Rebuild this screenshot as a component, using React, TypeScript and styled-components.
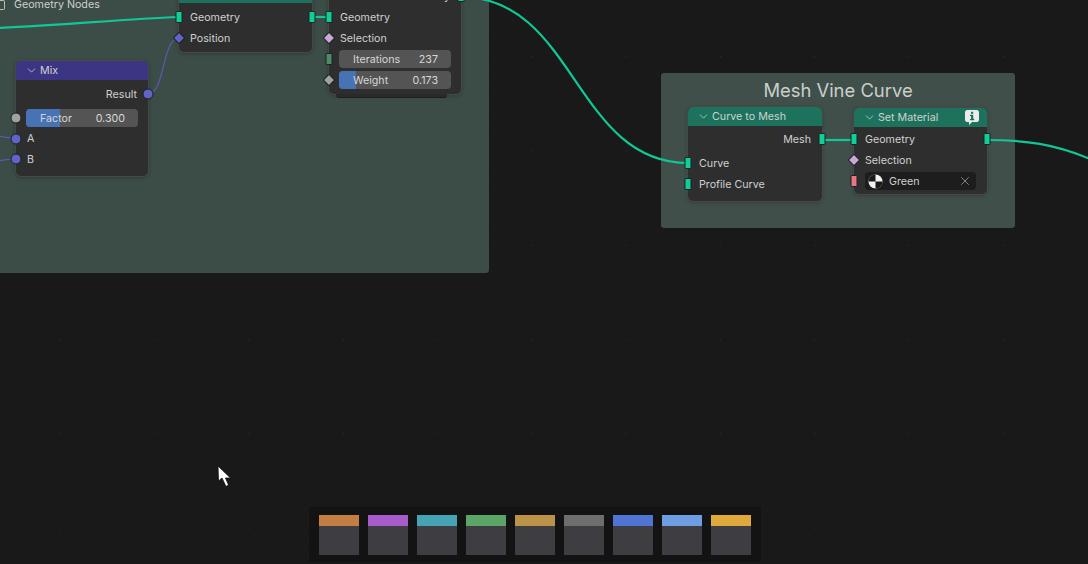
import React from 'react'
import styled, { createGlobalStyle } from 'styled-components'
import { ChevronDown, X } from 'lucide-react'

const GlobalStyle = createGlobalStyle`
  html, body {
    margin: 0;
    padding: 0;
    background: #181818;
  }
`

const Canvas = styled.div`
  position: relative;
  width: 1088px;
  height: 564px;
  overflow: hidden;
  display: flex;
  justify-content: center;
  align-items: flex-end;
  padding: 0 18px 2px 0;
  box-sizing: border-box;
  background-color: #191919;
  background-image: radial-gradient(circle at 0.5px 0.5px, #2b2b2b 0.8px, transparent 1px),
    radial-gradient(circle at 0.5px 0.5px, #202020 0.8px, transparent 1px);
  background-size: 94.3px 94.3px, 18.86px 18.86px;
  background-position: 60px 56px, 3px 0px;
  font-family: Inter, 'Noto Sans', sans-serif;
  font-size: 10.7px;
  color: #d0d0d0;
`

const Frame = styled.div<{ $x: number; $y: number; $w: number; $h: number; $bg: string }>`
  position: absolute;
  left: ${(p) => p.$x}px;
  top: ${(p) => p.$y}px;
  width: ${(p) => p.$w}px;
  height: ${(p) => p.$h}px;
  background: ${(p) => p.$bg};
  border-radius: 3px;
  text-align: center;
`

const FrameTitle = styled.div`
  padding-top: 6px;
  font-size: 18.4px;
  line-height: 22px;
  color: #c9cfcc;
`

const Node = styled.div<{ $x: number; $y: number; $w?: number; $bottom?: number }>`
  position: absolute;
  left: ${(p) => p.$x}px;
  top: ${(p) => p.$y}px;
  width: ${(p) => p.$w ?? 133}px;
  box-sizing: border-box;
  background: #2e2e2e;
  border-radius: 5px;
  box-shadow: 0 0 0 1px #454a48, 0 1px 4px rgba(0, 0, 0, 0.35);
  padding-bottom: ${(p) => p.$bottom ?? 7}px;
`

const Header = styled.div<{ $bg: string }>`
  display: flex;
  align-items: center;
  height: 19px;
  padding: 0 8px 0 9px;
  gap: 2px;
  box-sizing: border-box;
  background: ${(p) => p.$bg};
  border-radius: 5px 5px 0 0;
  color: #d0d0d0;
  svg {
    flex: none;
  }
`

const HeaderTitle = styled.span`
  flex: 1;
`

const Rows = styled.div<{ $pad: number }>`
  padding-top: ${(p) => p.$pad}px;
`

const Row = styled.div<{ $right?: boolean; $gap?: number; $h?: number }>`
  position: relative;
  height: ${(p) => p.$h ?? 21}px;
  margin-top: ${(p) => p.$gap ?? 0}px;
  padding: 1px 11px 0;
  display: flex;
  align-items: center;
  justify-content: ${(p) => (p.$right ? 'flex-end' : 'flex-start')};
  box-sizing: border-box;
`

type SocketKind = 'geo' | 'diamond' | 'grey' | 'circle' | 'mat' | 'int' | 'float' | 'vector'

const socketColors: Record<SocketKind, string> = {
  geo: '#12cc9a',
  diamond: '#cca6d6',
  grey: '#a1a1a1',
  circle: '#6363c7',
  mat: '#eb7582',
  int: '#4f8a68',
  float: '#a1a1a1',
  vector: '#6363c7',
}

const isBar = (k: SocketKind) => k === 'geo' || k === 'mat' || k === 'int'
const isDiamond = (k: SocketKind) => k === 'diamond' || k === 'float' || k === 'vector'

const Socket = styled.span<{ $kind: SocketKind; $right?: boolean }>`
  position: absolute;
  top: calc(50% + 0.5px);
  ${(p) => (p.$right ? 'right: 0;' : 'left: 0;')}
  transform: translate(${(p) => (p.$right ? '50%' : '-50%')}, -50%)
    ${(p) => (isDiamond(p.$kind) ? 'rotate(45deg)' : '')};
  box-sizing: border-box;
  border: 1px solid #17241f;
  width: ${(p) => (isBar(p.$kind) ? 7 : isDiamond(p.$kind) ? 9 : 11)}px;
  height: ${(p) => (isBar(p.$kind) ? 12 : isDiamond(p.$kind) ? 9 : 11)}px;
  border-radius: ${(p) => (p.$kind === 'grey' || p.$kind === 'circle' ? '50%' : '1px')};
  background: ${(p) => socketColors[p.$kind]};
`

const Field = styled.div`
  position: relative;
  flex: 1;
  height: 18px;
  margin-left: -1px;
  margin-right: -1px;
  padding: 0 13px 0 14px;
  display: flex;
  align-items: center;
  justify-content: space-between;
  background: #545454;
  border-radius: 4px;
  overflow: hidden;
  color: #d6d6d6;
  span {
    position: relative;
  }
`

const Fill = styled.div`
  position: absolute;
  left: 0;
  top: 0;
  bottom: 0;
  background: #4772b3;
`

const MaterialField = styled.div`
  flex: 1;
  height: 18px;
  padding: 0 4px 0 3px;
  display: flex;
  align-items: center;
  gap: 6px;
  background: #1d1d1d;
  border-radius: 4px;
  color: #d0d0d0;
  span {
    flex: 1;
  }
`

const StackEdge = styled.div`
  position: absolute;
  left: 7px;
  right: 14px;
  bottom: -4px;
  height: 3px;
  background: #2a2a2a;
  border-bottom: 1px solid #1e1e1e;
  border-radius: 0 0 3px 3px;
`

const Label = styled.div`
  position: absolute;
  left: 14px;
  top: -2px;
  color: #cfcfcf;
  line-height: 14px;
`

const BracketIcon = styled.div`
  position: absolute;
  left: -14px;
  top: 2px;
  width: 4px;
  height: 8px;
  border: solid #b8bdbb;
  border-width: 1px 1px 1px 0;
  border-radius: 0 2px 2px 0;
`

const Wires = styled.svg`
  position: absolute;
  left: 0;
  top: 0;
  pointer-events: none;
`

const Cursor = styled.svg`
  position: absolute;
  left: 217px;
  top: 465px;
`

const Palette = styled.div`
  position: relative;
  display: flex;
  gap: 9px;
  padding: 8px 10px 7px;
  background: #131313;
`

const Swatch = styled.div<{ $color: string }>`
  width: 40px;
  height: 40px;
  background: linear-gradient(${(p) => p.$color} 11px, #3e3e42 11px);
`

const swatches = ['#c47e41', '#a85ccb', '#46a3b4', '#5ba566', '#bc9148', '#6e6e6e', '#4f74d3', '#6d9ee2', '#dfaa3b']

const TEAL_HEADER = '#1d725e'
const PURPLE_HEADER = '#3c3584'

const Chevron = () => <ChevronDown size={13} strokeWidth={1.4} color="#d4d4d4" />

const InfoIcon = () => (
  <svg width="14" height="15" viewBox="0 0 14 15">
    <path d="M2.500 0h9A2.500 2.500 0 0 1 14 2.500v7a2.500 2.500 0 0 1-2.500 2.500H7l-3 3v-3H2.500A2.500 2.500 0 0 1 0 9.500v-7A2.500 2.500 0 0 1 2.500 0z" fill="#ececec" />
    <rect x="6" y="1.800" width="2.200" height="2" fill="#1d725e" />
    <path d="M5 4.800h3.200v4h1V10.200H5V9h1V6H5z" fill="#1d725e" />
  </svg>
)

const MaterialIcon = () => (
  <svg width="15" height="15" viewBox="0 0 16 16">
    <circle cx="8" cy="8" r="7.500" fill="#f2f2f2" />
    <path d="M8 .5A7.500 7.500 0 0 0 .5 8H8z" fill="#1a1a1a" />
    <path d="M8 8h7.500A7.500 7.500 0 0 1 8 15.500z" fill="#1a1a1a" />
  </svg>
)

export default function App() {
  return (
    <>
      <GlobalStyle />
      <Canvas>
        <Frame $x={-20} $y={-20} $w={509} $h={293} $bg="#3c4c46" />
        <Frame $x={661} $y={73} $w={354} $h={155} $bg="#414f4a">
          <FrameTitle>Mesh Vine Curve</FrameTitle>
        </Frame>

        <Label>
          <BracketIcon />
          Geometry Nodes
        </Label>

        <Wires width="1088" height="564" viewBox="0 0 1088 564" fill="none">
          <g stroke="#0fc896" strokeWidth="2.200">
            <path d="M-5 28 C60 26 120 19 179 17" />
            <path d="M312 17 H329" />
            <path d="M461 -3 C575 -3 575 163 688 163" />
            <path d="M822 140 H854" />
            <path d="M987 140 C1025 140 1055 144 1090 159" />
          </g>
          <g stroke="#5c58b4" strokeWidth="1.200">
            <path d="M148 94 C165 94 162 38 179 38" />
            <path d="M-2 136 C5 137 8 138 16 138" />
            <path d="M-2 161 C5 160 8 159 16 159" />
          </g>
        </Wires>

        <Node $x={179} $y={-16} $bottom={4}>
          <Header $bg={TEAL_HEADER} />
          <Rows $pad={3}>
            <Row>
              <Socket $kind="geo" />
              Geometry
              <Socket $kind="geo" $right />
            </Row>
            <Row>
              <Socket $kind="vector" />
              Position
            </Row>
          </Rows>
        </Node>

        <Node $x={329} $y={-16} $w={132} $bottom={4}>
          <StackEdge />
          <Rows $pad={1}>
            <Row $right>
              Geometry
              <Socket $kind="geo" $right />
            </Row>
            <Row>
              <Socket $kind="geo" />
              Geometry
            </Row>
            <Row>
              <Socket $kind="diamond" />
              Selection
            </Row>
            <Row>
              <Socket $kind="int" />
              <Field>
                <span>Iterations</span>
                <span>237</span>
              </Field>
            </Row>
            <Row>
              <Socket $kind="float" />
              <Field>
                <Fill style={{ width: '15.500%' }} />
                <span>Weight</span>
                <span>0.173</span>
              </Field>
            </Row>
          </Rows>
        </Node>

        <Node $x={16} $y={61} $w={132}>
          <Header $bg={PURPLE_HEADER}>
            <Chevron />
            <HeaderTitle>Mix</HeaderTitle>
          </Header>
          <Rows $pad={3}>
            <Row $right>
              Result
              <Socket $kind="circle" $right />
            </Row>
            <Row $gap={3}>
              <Socket $kind="grey" />
              <Field>
                <Fill style={{ width: '30%' }} />
                <span>Factor</span>
                <span>0.300</span>
              </Field>
            </Row>
            <Row $h={20}>
              <Socket $kind="circle" />A
            </Row>
            <Row>
              <Socket $kind="circle" />B
            </Row>
          </Rows>
        </Node>

        <Node $x={688} $y={107} $w={134}>
          <Header $bg={TEAL_HEADER}>
            <Chevron />
            <HeaderTitle>Curve to Mesh</HeaderTitle>
          </Header>
          <Rows $pad={2}>
            <Row $right>
              Mesh
              <Socket $kind="geo" $right />
            </Row>
            <Row $gap={3}>
              <Socket $kind="geo" />
              Curve
            </Row>
            <Row>
              <Socket $kind="geo" />
              Profile Curve
            </Row>
          </Rows>
        </Node>

        <Node $x={854} $y={108} $w={133} $bottom={3}>
          <Header $bg={TEAL_HEADER}>
            <Chevron />
            <HeaderTitle>Set Material</HeaderTitle>
            <InfoIcon />
          </Header>
          <Rows $pad={1}>
            <Row>
              <Socket $kind="geo" />
              Geometry
              <Socket $kind="geo" $right />
            </Row>
            <Row>
              <Socket $kind="diamond" />
              Selection
            </Row>
            <Row>
              <Socket $kind="mat" />
              <MaterialField>
                <MaterialIcon />
                <span>Green</span>
                <X size={14} strokeWidth={1} color="#c8c8c8" />
              </MaterialField>
            </Row>
          </Rows>
        </Node>

        <Palette>
          {swatches.map((color) => (
            <Swatch key={color} $color={color} />
          ))}
        </Palette>

        <Cursor width="16" height="24" viewBox="0 0 16 24">
          <path d="M1 1 L1.500 16 L5 13 L9 21.500 L11.500 20 L8.500 13 L13.500 13 Z" fill="#fff" stroke="#111" strokeWidth="0.8" />
        </Cursor>
      </Canvas>
    </>
  )
}
